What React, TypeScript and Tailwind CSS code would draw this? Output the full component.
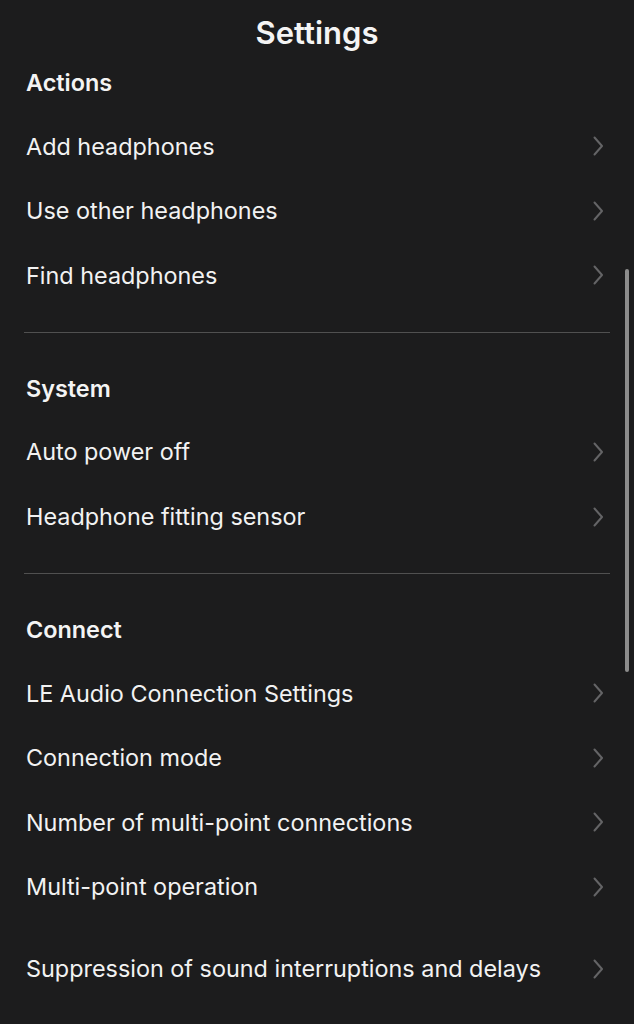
const sections = [
  {
    title: "Actions",
    items: ["Add headphones", "Use other headphones", "Find headphones"],
  },
  {
    title: "System",
    items: ["Auto power off", "Headphone fitting sensor"],
  },
  {
    title: "Connect",
    items: [
      "LE Audio Connection Settings",
      "Connection mode",
      "Number of multi-point connections",
      "Multi-point operation",
    ],
  },
]

function Chevron() {
  return (
    <svg width="11" height="20" viewBox="0 0 11 20" fill="none" className="text-[#646466]">
      <path d="M1.5 1.5 L9 10 L1.5 18.5" stroke="currentColor" strokeWidth="2" strokeLinecap="round" strokeLinejoin="round" />
    </svg>
  )
}

function Row({ label }: { label: string }) {
  return (
    <div className="flex h-[64.6px] items-center justify-between pl-[26px] pr-[30px]">
      <span className="text-[23.4px] leading-none text-[#f2f2f2]">{label}</span>
      <Chevron />
    </div>
  )
}

export default function App() {
  return (
    <div className="relative h-[1024px] w-[634px] overflow-hidden bg-[#1c1c1d] font-['Inter',sans-serif]">
      <h1 className="pt-[15px] text-center text-[31px] font-semibold leading-[36px] text-[#f4f4f4]">Settings</h1>

      {sections.map((s, i) => (
        <div key={s.title}>
          {i > 0 && (
            <div className="py-[24px] pl-[24px] pr-[24px]">
              <div className="h-px bg-[#505050]" />
            </div>
          )}
          <div className="flex h-[63px] items-center pl-[26px]">
            <span className="text-[23.4px] font-semibold leading-none text-[#f4f4f4]">{s.title}</span>
          </div>
          {s.items.map((it) => (
            <Row key={it} label={it} />
          ))}
        </div>
      ))}

      <div className="mt-[17px]">
        <Row label="Suppression of sound interruptions and delays" />
      </div>

      <div className="absolute left-[625px] top-[269px] h-[403px] w-[4px] rounded-full bg-[#8c8c8c]" />
    </div>
  )
}
